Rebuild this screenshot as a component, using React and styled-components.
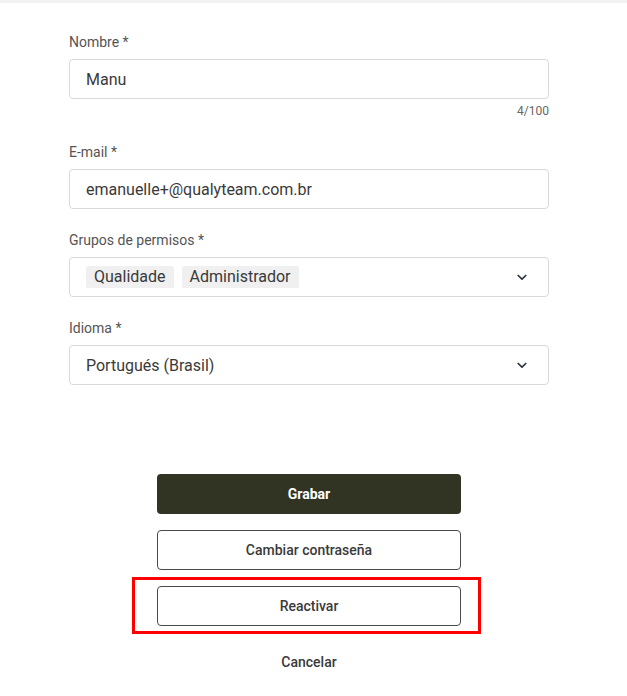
import React from 'react';
import styled, { createGlobalStyle } from 'styled-components';

const GlobalStyle = createGlobalStyle`
  body {
    margin: 0;
    background: #fff;
    font-family: Roboto, 'Liberation Sans', sans-serif;
  }
`;

const Page = styled.div`
  border-top: 3px solid #f2f2f2;
  padding: 28px 0 20px;
`;

const Form = styled.div`
  width: 480px;
  margin-left: 69px;
  display: flex;
  flex-direction: column;
`;

const Field = styled.div`
  display: flex;
  flex-direction: column;
  margin-bottom: ${(props) => (props.last ? '0' : '20px')};
`;

const Label = styled.label`
  font-size: 14px;
  line-height: 20px;
  color: #555;
  padding-top: 1px;
  margin-bottom: 7px;
`;

const InputBox = styled.div`
  box-sizing: border-box;
  height: 40px;
  border: 1px solid #d9d9d9;
  border-radius: 4px;
  padding: 0 ${(props) => (props.select ? '21px' : '16px')} 0 16px;
  display: flex;
  align-items: center;
  gap: 8px;
  font-size: 16px;
  color: #3a3a3a;
`;

const Value = styled.span`
  flex: 1;
`;

const Counter = styled.div`
  font-size: 12px;
  line-height: 16px;
  color: #666;
  text-align: right;
  margin-top: 4px;
  margin-bottom: 2px;
`;

const Chip = styled.span`
  background: #f0f0f0;
  padding: 0 8px;
  height: 22px;
  line-height: 22px;
  border-radius: 2px;
  font-size: 16px;
  color: #3a3a3a;
`;

const Chips = styled.div`
  flex: 1;
  display: flex;
  gap: 8px;
`;

const Actions = styled.div`
  width: 304px;
  margin: 89px 0 0 157px;
  display: flex;
  flex-direction: column;
  gap: 16px;
`;

const Button = styled.button`
  box-sizing: border-box;
  width: 100%;
  height: 40px;
  border-radius: 4px;
  font-family: Roboto, 'Liberation Sans', sans-serif;
  font-size: 14px;
  cursor: pointer;
  ${(props) =>
    props.primary
      ? `background: #323423; color: #fff; border: none; font-weight: 700;`
      : props.link
      ? `background: transparent; color: #3a3a3a; border: none; font-weight: 500;`
      : `background: #fff; color: #3a3a3a; border: 1px solid #4a4a4a; font-weight: 500;`}
`;

const Highlight = styled.div`
  position: relative;
  &::after {
    content: '';
    position: absolute;
    left: -25px;
    right: -20px;
    top: -9px;
    bottom: -8px;
    border: 3px solid #f00;
    pointer-events: none;
  }
`;

function Chevron() {
  return (
    <svg width="10" height="7" viewBox="0 0 10 7" fill="none">
      <path d="M1.2 1.5 L5 5.2 L8.8 1.5" stroke="#2c3442" strokeWidth="1.7" strokeLinecap="round" strokeLinejoin="round" />
    </svg>
  );
}

export default function App() {
  return (
    <Page>
      <GlobalStyle />
      <Form>
        <Field>
          <Label>Nombre *</Label>
          <InputBox>
            <Value>Manu</Value>
          </InputBox>
          <Counter>4/100</Counter>
        </Field>
        <Field>
          <Label>E-mail *</Label>
          <InputBox>
            <Value>emanuelle+@qualyteam.com.br</Value>
          </InputBox>
        </Field>
        <Field>
          <Label>Grupos de permisos *</Label>
          <InputBox select>
            <Chips>
              <Chip>Qualidade</Chip>
              <Chip>Administrador</Chip>
            </Chips>
            <Chevron />
          </InputBox>
        </Field>
        <Field last>
          <Label>Idioma *</Label>
          <InputBox select>
            <Value>Portugués (Brasil)</Value>
            <Chevron />
          </InputBox>
        </Field>
      </Form>
      <Actions>
        <Button primary>Grabar</Button>
        <Button>Cambiar contraseña</Button>
        <Highlight>
          <Button>Reactivar</Button>
        </Highlight>
        <Button link>Cancelar</Button>
      </Actions>
    </Page>
  );
}
